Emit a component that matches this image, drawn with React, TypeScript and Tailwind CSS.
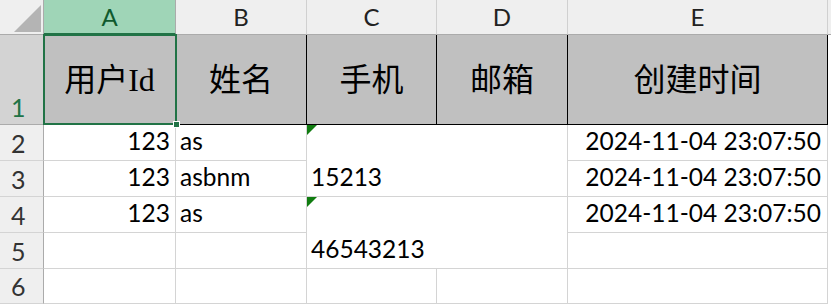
import React from "react";

const body = { fontFamily: 'Lato, "Noto Sans CJK SC", sans-serif' };
const head = { fontFamily: '"Liberation Serif", "Noto Sans CJK SC", serif' };

function ColHead({ label, active }: { label: string; active?: boolean }) {
  return (
    <div
      className={
        "flex items-center justify-center border-r border-b text-[24px] " +
        (active
          ? "bg-[#9fd5b7] text-[#0f5a2e] border-r-[#ababab] border-b-[#217346] border-b-2"
          : "bg-[#efefef] text-[#222] border-r-[#d0d0d0] border-b-[#ababab]")
      }
      style={body}
    >
      {label}
    </div>
  );
}

function RowHead({ n, active }: { n: number; active?: boolean }) {
  return (
    <div
      className={
        "flex items-end pl-[11px] pb-[4px] border-r border-b text-[25px] leading-none " +
        (active
          ? "bg-[#d3d3d3] text-[#217346] border-r-[#ababab] border-b-[#ababab]"
          : "bg-[#efefef] text-[#333] border-r-[#ababab] border-b-[#d4d4d4]")
      }
      style={body}
    >
      {n}
    </div>
  );
}

function H({ t }: { t: string }) {
  return (
    <div
      className="flex items-center justify-center bg-[#c0c0c0] border-r border-b border-black text-[32px] text-black"
      style={head}
    >
      {t}
    </div>
  );
}

function C({
  t,
  right,
  className = "",
  tri,
}: {
  t?: string;
  right?: boolean;
  className?: string;
  tri?: boolean;
}) {
  return (
    <div
      className={
        "relative flex items-end border-r border-b border-[#d4d4d4] bg-white text-[24.5px] leading-none text-black pb-[7px] " +
        (right ? "justify-end pr-[5px] " : "justify-start pl-[4px] ") +
        className
      }
      style={body}
    >
      {tri && (
        <span className="absolute left-0 top-0 w-0 h-0 border-t-[10px] border-t-[#107c10] border-r-[10px] border-r-transparent" />
      )}
      {t}
    </div>
  );
}

export default function App() {
  return (
    <div className="relative w-[831px] h-[304px] overflow-hidden bg-white">
      <div className="grid grid-cols-[44px_132px_131px_130px_131px_260px_3px] grid-rows-[35px_90px_36px_36px_36px_36px_35px]">
        {/* column header row */}
        <div className="relative bg-[#efefef] border-r border-b border-[#ababab]">
          <svg className="absolute left-0 top-0" width="44" height="35">
            <polygon points="14,32 41,32 41,5" fill="#b4b4b4" />
          </svg>
        </div>
        <ColHead label="A" active />
        <ColHead label="B" />
        <ColHead label="C" />
        <ColHead label="D" />
        <ColHead label="E" />
        <div className="bg-[#efefef] border-b border-[#ababab]" />

        {/* row 1 */}
        <RowHead n={1} active />
        <H t="用户Id" />
        <H t="姓名" />
        <H t="手机" />
        <H t="邮箱" />
        <H t="创建时间" />
        <div className="bg-white" />

        {/* row 2 */}
        <RowHead n={2} />
        <C t="123" right />
        <C t="as" />
        <C t="15213" className="col-span-2 row-span-2" tri />
        <C t="2024-11-04 23:07:50" right className="pr-[6px]" />
        <div className="bg-white" />

        {/* row 3 */}
        <RowHead n={3} />
        <C t="123" right />
        <C t="asbnm" />
        <C t="2024-11-04 23:07:50" right className="pr-[6px]" />
        <div className="bg-white" />

        {/* row 4 */}
        <RowHead n={4} />
        <C t="123" right />
        <C t="as" />
        <C t="46543213" className="col-span-2 row-span-2" tri />
        <C t="2024-11-04 23:07:50" right className="pr-[6px]" />
        <div className="bg-white" />

        {/* row 5 */}
        <RowHead n={5} />
        <C />
        <C />
        <C />
        <div className="bg-white" />

        {/* row 6 */}
        <RowHead n={6} />
        <C />
        <C />
        <C />
        <C />
        <C />
        <div className="bg-white" />
      </div>

      {/* selection border around A1 */}
      <div className="pointer-events-none absolute left-[43px] top-[34px] w-[134px] h-[91px] border-2 border-[#217346]" />
      <div className="pointer-events-none absolute left-[173px] top-[121px] w-[7px] h-[7px] bg-[#217346] border border-white" />
    </div>
  );
}
